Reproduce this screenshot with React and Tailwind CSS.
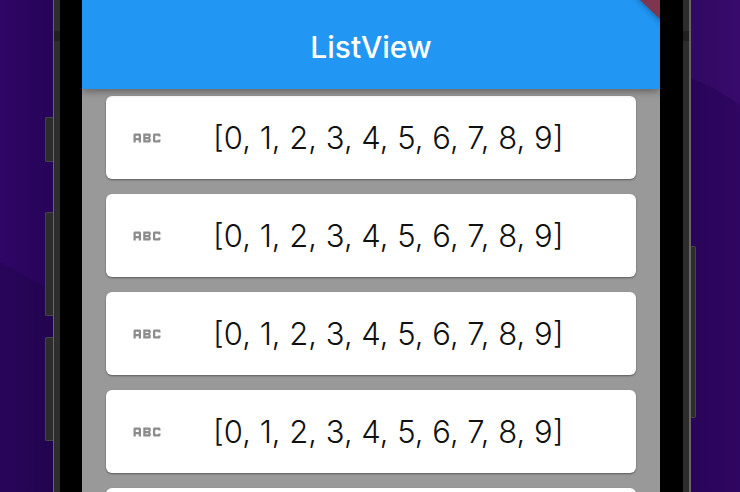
import React from 'react';
import { MdAbc } from 'react-icons/md';

const items = Array.from({ length: 5 }, () => [0, 1, 2, 3, 4, 5, 6, 7, 8, 9]);

function Wallpaper() {
    return (
        <svg
            className="absolute inset-0 -z-10 h-full w-full"
            viewBox="0 0 740 492"
            preserveAspectRatio="none"
            aria-hidden="true"
        >
            <defs>
                <linearGradient id="edgeLeft" x1="0" x2="1" y1="0" y2="0">
                    <stop offset="0" stopColor="#000020" stopOpacity="0" />
                    <stop offset="1" stopColor="#000020" stopOpacity="0.2" />
                </linearGradient>
                <linearGradient id="edgeRight" x1="1" x2="0" y1="0" y2="0">
                    <stop offset="0" stopColor="#000020" stopOpacity="0" />
                    <stop offset="1" stopColor="#000020" stopOpacity="0.15" />
                </linearGradient>
            </defs>
            <rect width="370" height="492" fill="#2f0566" />
            <path d="M0 262 L60 296 V492 H0Z" fill="#29055a" />
            <rect x="370" width="370" height="492" fill="#380a6c" />
            <path d="M680 76 Q700 78 740 105 V492 H680Z" fill="#2f0662" />
            <rect width="54" height="492" fill="url(#edgeLeft)" />
            <rect x="690" width="50" height="492" fill="url(#edgeRight)" />
        </svg>
    );
}

function DebugBanner() {
    return (
        <svg
            className="absolute top-0 right-0 h-8 w-8"
            viewBox="0 0 32 32"
            aria-hidden="true"
        >
            <defs>
                <filter id="bannerShadow" x="-50%" y="-50%" width="200%" height="200%">
                    <feGaussianBlur stdDeviation="3" />
                </filter>
            </defs>
            <path d="M7 -4 L36 25 V-4Z" fill="#000" opacity="0.3" filter="url(#bannerShadow)" />
            <path d="M12 0 L32 19 V0Z" fill="#7d3550" />
        </svg>
    );
}

function AppBar({ title }) {
    return (
        <header className="relative z-10 flex h-[89px] shrink-0 items-center justify-center bg-[#2196f3] pt-1 shadow-[0_2px_8px_rgba(0,0,0,0.4)]">
            <h1 className="text-[30px] leading-9 font-medium text-white">{title}</h1>
            <DebugBanner />
        </header>
    );
}

function ListTile({ values }) {
    return (
        <li className="flex h-[83px] shrink-0 items-center gap-12 rounded-md bg-white px-[23px] shadow-[0_1px_2px_rgba(0,0,0,0.4)]">
            <MdAbc className="h-9 w-9 shrink-0 text-[#8c8c8c]" />
            <span className="text-[31px] leading-9 font-light whitespace-nowrap text-[#111111]">
                [{values.join(', ')}]
            </span>
        </li>
    );
}

export default function App() {
    return (
        <div className="relative isolate flex h-screen overflow-hidden font-[Inter,sans-serif]">
            <Wallpaper />

            {/* Mute switch and volume buttons */}
            <div className="flex w-[53px] shrink-0 flex-col items-end pt-[117px]">
                <div className="h-[45px] w-2 rounded-l-xs border border-r-0 border-[#464646] bg-[#2c2c2c]" />
                <div className="mt-[50px] h-[104px] w-2 rounded-l-xs border border-r-0 border-[#464646] bg-[#2c2c2c]" />
                <div className="mt-[21px] h-[104px] w-2 rounded-l-xs border border-r-0 border-[#464646] bg-[#2c2c2c]" />
            </div>

            {/* Metal frame, with the antenna bands near the top */}
            <div className="w-[7px] shrink-0 border-l border-[#666666] bg-[#2d2d2d] pt-[31px]">
                <div className="h-[10px] bg-[#202020]" />
            </div>

            <main className="flex min-w-0 flex-1 flex-col border-r-[23px] border-l-[22px] border-black bg-[#999999]">
                <AppBar title="ListView" />
                <ul className="flex flex-col gap-[15px] px-6 pt-[7px]">
                    {items.map((values, index) => (
                        <ListTile key={index} values={values} />
                    ))}
                </ul>
            </main>

            <div className="w-2 shrink-0 border-r-2 border-[#666666] bg-[#2d2d2d] pt-[31px]">
                <div className="h-[10px] bg-[#202020]" />
            </div>

            {/* Power button */}
            <div className="w-[49px] shrink-0 pt-[246px]">
                <div className="h-[172px] w-[5px] rounded-r-xs border border-l-0 border-[#464646] bg-[#2c2c2c]" />
            </div>
        </div>
    );
}
